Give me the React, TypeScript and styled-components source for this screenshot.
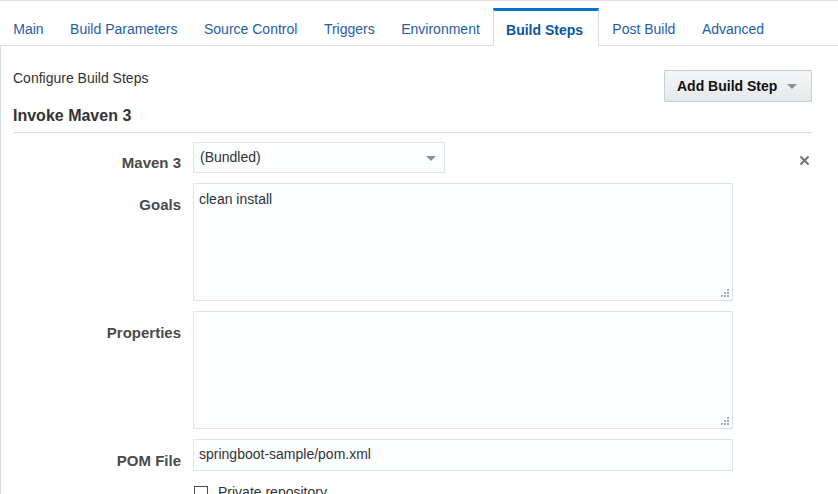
import React from "react";
import styled, { createGlobalStyle } from "styled-components";

const GlobalStyle = createGlobalStyle`
    html, body {
        margin: 0;
        padding: 0;
        background: #ffffff;
        font-family: "Liberation Sans", Arial, sans-serif;
        color: #333333;
    }
    * {
        box-sizing: border-box;
    }
`;

const tabs = ["Main", "Build Parameters", "Source Control", "Triggers", "Environment", "Build Steps", "Post Build", "Advanced"];

const Page = styled.div`
    width: 838px;
    height: 494px;
    overflow: hidden;
    border-top: 1px solid #dde2e6;
`;

const TabBar = styled.div`
    display: flex;
    padding-top: 7px;
    border-bottom: 1px solid #d6dfe6;
`;

const Tab = styled.div<{ $active?: boolean }>`
    display: flex;
    align-items: flex-end;
    padding: ${(p) => (p.$active ? "0 15px 7px 12px" : "0 13.25px 7px")};
    font-size: 14px;
    line-height: 17px;
    color: ${(p) => (p.$active ? "#0a57a2" : "#1f5ea4")};
    font-weight: ${(p) => (p.$active ? "bold" : "normal")};
    border-top: 3px solid ${(p) => (p.$active ? "#0572ce" : "transparent")};
    border-left: ${(p) => (p.$active ? "1px solid #d6dfe6" : "none")};
    border-right: ${(p) => (p.$active ? "1px solid #d6dfe6" : "none")};
    background: ${(p) => (p.$active ? "#ffffff" : "transparent")};
    margin-bottom: ${(p) => (p.$active ? "-1px" : "0")};
    height: ${(p) => (p.$active ? "38px" : "37px")};
    cursor: pointer;
`;

const Panel = styled.div`
    border-left: 1px solid #d6dfe6;
    padding: 0 26px 0 12px;
    height: 460px;
`;

const HeaderRow = styled.div`
    display: flex;
    justify-content: space-between;
    align-items: flex-start;
    padding-top: 24px;
`;

const Intro = styled.div`
    font-size: 14px;
    line-height: 16px;
    color: #333333;
`;

const AddButton = styled.button`
    display: flex;
    align-items: center;
    gap: 10px;
    height: 32px;
    width: 148px;
    padding: 0 12px;
    font-family: "Liberation Sans", Arial, sans-serif;
    font-size: 14px;
    font-weight: bold;
    color: #111111;
    background: linear-gradient(#f4f6f7, #e6e9eb);
    border: 1px solid #c5ced6;
    border-radius: 1px;
    cursor: pointer;
`;

const Caret = styled.span<{ $size?: number }>`
    width: 0;
    height: 0;
    border-left: ${(p) => p.$size ?? 5}px solid transparent;
    border-right: ${(p) => p.$size ?? 5}px solid transparent;
    border-top: ${(p) => p.$size ?? 5}px solid #8a8f93;
`;

const Heading = styled.div`
    margin-top: 4px;
    padding-bottom: 7px;
    border-bottom: 1px solid #d6dfe6;
    font-size: 16px;
    line-height: 19px;
    font-weight: bold;
    color: #333333;
`;

const Form = styled.div`
    display: flex;
    flex-direction: column;
    gap: 10px;
    padding-top: 9px;
`;

const Row = styled.div`
    display: flex;
    align-items: flex-start;
    gap: 12px;
`;

const Label = styled.div<{ $top: number }>`
    width: 168px;
    flex-shrink: 0;
    text-align: right;
    padding-top: ${(p) => p.$top}px;
    font-size: 15px;
    line-height: 17px;
    font-weight: bold;
    color: #4a4a4a;
`;

const fieldBase = `
    background: #fcfdfe;
    border: 1px solid #dfe4e8;
    font-family: "Liberation Sans", Arial, sans-serif;
    font-size: 14px;
    color: #333333;
`;

const Select = styled.div`
    ${fieldBase}
    width: 252px;
    height: 31px;
    display: flex;
    align-items: center;
    justify-content: space-between;
    padding: 0 8px 0 6px;
    line-height: 17px;
`;

const SelectCaret = styled(Caret)`
    margin-top: 1px;
`;

const CloseButton = styled.button`
    margin-left: auto;
    margin-top: 10px;
    width: 16px;
    height: 16px;
    padding: 0;
    border: none;
    background: transparent;
    display: flex;
    align-items: center;
    justify-content: center;
    cursor: pointer;
`;

const AreaWrap = styled.div`
    position: relative;
    width: 540px;
    height: 118px;
`;

const TextArea = styled.textarea`
    ${fieldBase}
    display: block;
    width: 100%;
    height: 100%;
    resize: none;
    padding: 7px 5px;
    line-height: 17px;
    outline: none;
`;

const Grip = styled.svg`
    position: absolute;
    right: 3px;
    bottom: 3px;
`;

const TextInput = styled.input`
    ${fieldBase}
    display: block;
    width: 540px;
    height: 32px;
    padding: 0 5px 2px;
    outline: none;
`;

const CheckRow = styled.label`
    display: flex;
    align-items: center;
    gap: 10px;
    margin-left: 181px;
    margin-top: 3px;
    font-size: 14px;
    line-height: 17px;
    color: #333333;
`;

const Box = styled.span`
    width: 14px;
    height: 14px;
    border: 1px solid #4d4d4d;
    background: #ffffff;
    display: inline-block;
`;

function ResizeGrip() {
    const dots = [
        [8, 0],
        [8, 3],
        [5, 3],
        [8, 6],
        [5, 6],
        [2, 6],
    ];
    return (
        <Grip width="11" height="9" viewBox="0 0 11 9">
            {dots.map(([x, y]) => (
                <rect key={`${x}_${y}`} x={x} y={y} width="2" height="2" fill="#a9adb1" />
            ))}
        </Grip>
    );
}

function Area(props: { value: string }) {
    return (
        <AreaWrap>
            <TextArea defaultValue={props.value} />
            <ResizeGrip />
        </AreaWrap>
    );
}

export default function App() {
    return (
        <Page>
            <GlobalStyle />
            <TabBar>
                {tabs.map((t) => (
                    <Tab key={t} $active={t === "Build Steps"}>
                        {t}
                    </Tab>
                ))}
            </TabBar>
            <Panel>
                <HeaderRow>
                    <Intro>Configure Build Steps</Intro>
                    <AddButton>
                        Add Build Step
                        <Caret />
                    </AddButton>
                </HeaderRow>
                <Heading>Invoke Maven 3</Heading>
                <Form>
                    <Row>
                        <Label $top={12}>Maven 3</Label>
                        <Select>
                            (Bundled)
                            <SelectCaret />
                        </Select>
                        <CloseButton aria-label="Remove">
                            <svg width="11" height="11" viewBox="0 0 11 11">
                                <path d="M1.5 1.5 L9.5 9.5 M9.5 1.5 L1.5 9.5" stroke="#6f7478" strokeWidth="2" />
                            </svg>
                        </CloseButton>
                    </Row>
                    <Row>
                        <Label $top={13}>Goals</Label>
                        <Area value="clean install" />
                    </Row>
                    <Row>
                        <Label $top={13}>Properties</Label>
                        <Area value="" />
                    </Row>
                    <Row>
                        <Label $top={13}>POM File</Label>
                        <TextInput defaultValue="springboot-sample/pom.xml" />
                    </Row>
                    <CheckRow>
                        <Box />
                        Private repository
                    </CheckRow>
                </Form>
            </Panel>
        </Page>
    );
}
